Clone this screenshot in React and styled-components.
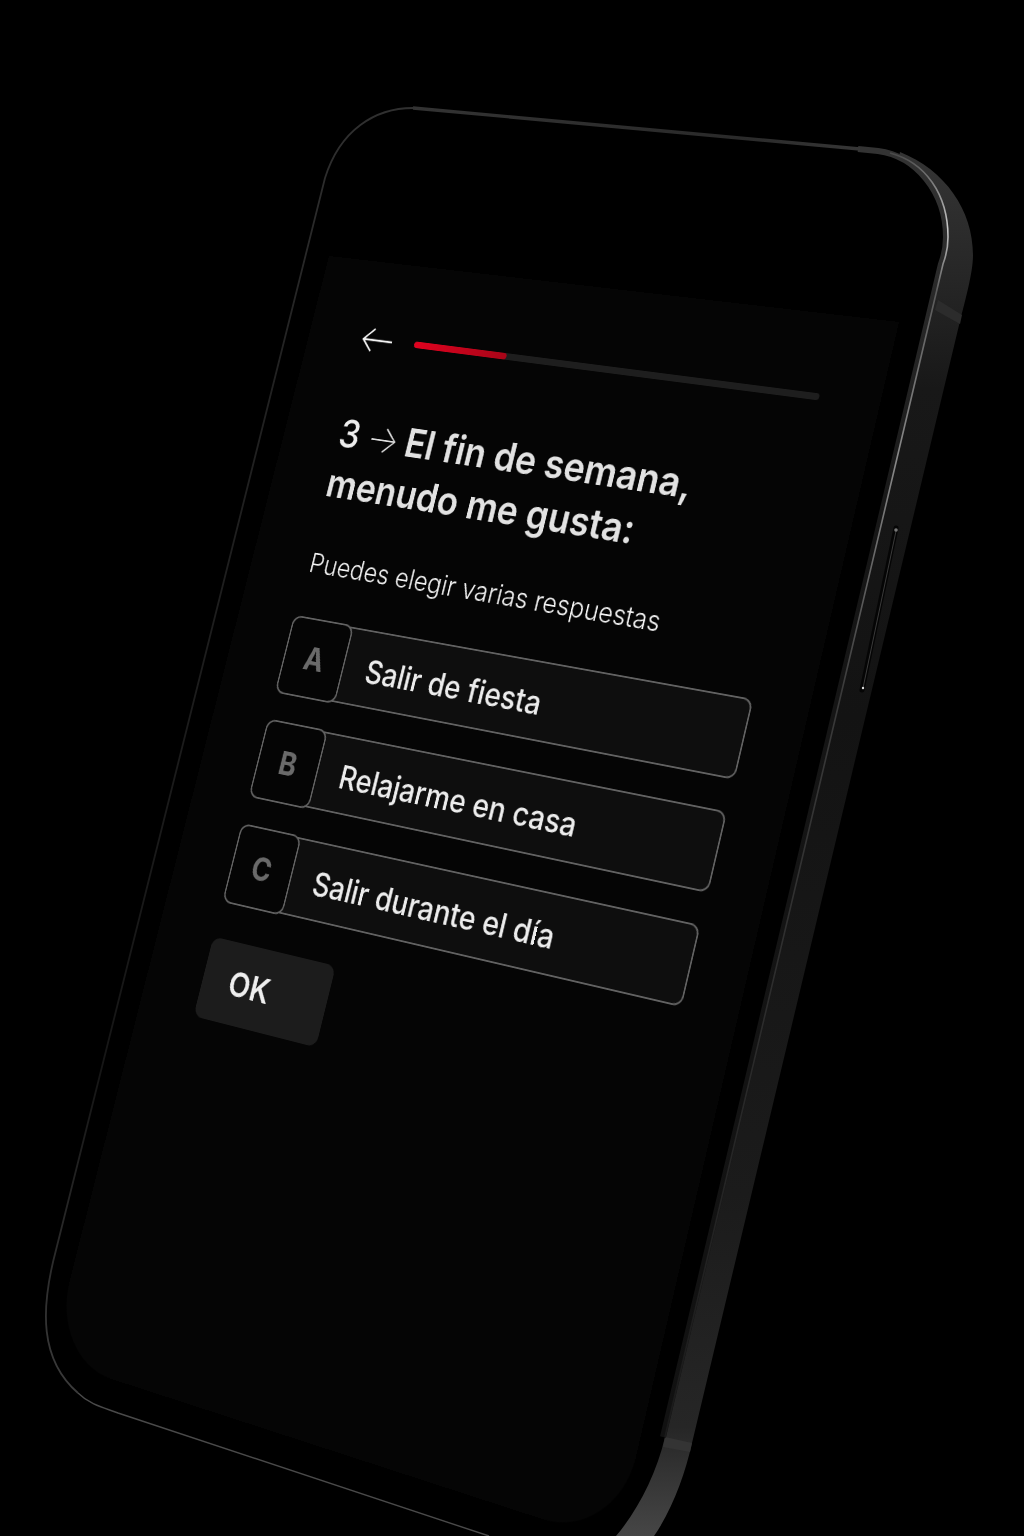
import styled, { createGlobalStyle } from 'styled-components'

const SCREEN_W = 390
const SCREEN_H = 680

// corners of the tilted screen in the photo: top left, top right, bottom right, bottom left
const quadTransform = ([p0, p1, p2, p3], w, h) => {
    const dx1 = p1[0] - p2[0]
    const dx2 = p3[0] - p2[0]
    const sx = p0[0] - p1[0] + p2[0] - p3[0]
    const dy1 = p1[1] - p2[1]
    const dy2 = p3[1] - p2[1]
    const sy = p0[1] - p1[1] + p2[1] - p3[1]
    const den = dx1 * dy2 - dx2 * dy1
    const g = (sx * dy2 - dx2 * sy) / den
    const k = (dx1 * sy - sx * dy1) / den
    const a = p1[0] - p0[0] + g * p1[0]
    const b = p3[0] - p0[0] + k * p3[0]
    const d = p1[1] - p0[1] + g * p1[1]
    const e = p3[1] - p0[1] + k * p3[1]
    return `matrix3d(${a / w},${d / w},0,${g / w},${b / h},${e / h},0,${k / h},0,0,1,0,${p0[0]},${p0[1]},0,1)`
}

const screenTransform = quadTransform(
    [[329, 256], [899, 322], [616, 1543], [50, 1359]],
    SCREEN_W,
    SCREEN_H
)

const options = [
    { letter: 'A', label: 'Salir de fiesta' },
    { letter: 'B', label: 'Relajarme en casa' },
    { letter: 'C', label: 'Salir durante el día' },
]

const PhoneBody = () => (
    <BodySvg viewBox="0 0 1024 1536" width="1024" height="1536">
        <defs>
            <linearGradient id="band" gradientUnits="userSpaceOnUse" x1="0" y1="170" x2="0" y2="1536">
                <stop offset="0" stopColor="#333" />
                <stop offset="0.08" stopColor="#262626" />
                <stop offset="0.16" stopColor="#181818" />
                <stop offset="0.4" stopColor="#131313" />
                <stop offset="0.75" stopColor="#1b1b1b" />
                <stop offset="0.92" stopColor="#262626" />
                <stop offset="1" stopColor="#464646" />
            </linearGradient>
            <linearGradient id="shine" gradientUnits="userSpaceOnUse" x1="0" y1="150" x2="0" y2="1440">
                <stop offset="0" stopColor="#444" />
                <stop offset="0.06" stopColor="#c8c8c8" />
                <stop offset="0.11" stopColor="#5a5a5a" />
                <stop offset="0.24" stopColor="#8a8a8a" />
                <stop offset="0.42" stopColor="#3a3a3a" />
                <stop offset="1" stopColor="#1a1a1a" />
            </linearGradient>
            <linearGradient id="bezel" gradientUnits="userSpaceOnUse" x1="0" y1="150" x2="0" y2="1440">
                <stop offset="0" stopColor="#333" />
                <stop offset="0.1" stopColor="#2a2a2a" />
                <stop offset="0.3" stopColor="#161616" />
                <stop offset="1" stopColor="#111" />
            </linearGradient>
            <linearGradient id="topEdge" gradientUnits="userSpaceOnUse" x1="413" y1="0" x2="880" y2="0">
                <stop offset="0" stopColor="#333" />
                <stop offset="0.7" stopColor="#2a2a2a" />
                <stop offset="1" stopColor="#383838" />
            </linearGradient>
            <linearGradient id="leftEdge" gradientUnits="userSpaceOnUse" x1="0" y1="110" x2="0" y2="1400">
                <stop offset="0" stopColor="#303030" />
                <stop offset="0.2" stopColor="#222" />
                <stop offset="0.75" stopColor="#161616" />
                <stop offset="1" stopColor="#3c3c3c" />
            </linearGradient>
        </defs>
        <path
            d="M900 152 C945 170 973 210 973 255 C973 270 968 290 960 321 L692 1443 C685 1475 672 1510 654 1536 L640 1560 L600 1560 L660 1420 Z"
            fill="url(#band)"
        />
        <path
            d="M413 108 L880 151 C918 156 948 192 948 237 C948 248 946 256 943 264 L665 1437 C656 1475 638 1510 616 1536 L600 1560 L540 1560 L118 1413 C105 1408 90 1405 78 1393 C40 1360 40 1310 56 1250 L325 178 C340 130 375 108 413 108 Z"
            fill="#000"
        />
        <path d="M938 300 L962 315 L960 324 L935 310 Z" fill="#2c2c2c" />
        <path d="M665 1437 L692 1443 L690 1452 L663 1447 Z" fill="#343434" />
        <path d="M860 149 L880 151 C918 156 948 192 948 237 C948 248 946 256 943 264 L665 1437" fill="none" stroke="url(#bezel)" strokeWidth="6" transform="translate(-2 0)" />
        <path d="M890 153 C925 162 948 194 948 237 C948 248 946 256 943 264 L665 1437" fill="none" stroke="url(#shine)" strokeWidth="1.6" />
        <path d="M413 108 L860 149" fill="none" stroke="url(#topEdge)" strokeWidth="3.4" />
        <path d="M413 108 C375 108 340 130 325 178 L56 1250 C40 1310 40 1360 78 1393" fill="none" stroke="url(#leftEdge)" strokeWidth="1.8" />
        <path d="M78 1393 C90 1405 105 1408 118 1413 L489 1536" fill="none" stroke="#4a4a4a" strokeWidth="1.4" />
        <path d="M896 528 L862 690" fill="none" stroke="#050505" strokeWidth="5" strokeLinecap="round" />
        <path d="M896 531 L863 688" fill="none" stroke="#484848" strokeWidth="0.8" />
        <circle cx="896" cy="530" r="1.8" fill="#777" />
        <circle cx="863" cy="688" r="1.2" fill="#ddd" />
    </BodySvg>
)

const BackArrow = () => (
    <ArrowSvg viewBox="0 0 22 16">
        <path d="M22 8.5 H1 M8 1.5 L1 8.5 L8 15.5" fill="none" stroke="#f2f2f2" strokeWidth="1.2" />
    </ArrowSvg>
)

const App = () => {
    return (
        <Stage>
            <GlobalStyle />
            <PhoneBody />
            <Screen style={{ transform: screenTransform }}>
                <Header>
                    <BackArrow />
                    <Track>
                        <Fill $value={24} />
                    </Track>
                </Header>
                <Title>
                    <Step>3 </Step>
                    <StepArrow>→ </StepArrow>
                    El fin de semana,
                    <br />
                    menudo me gusta:
                </Title>
                <Hint>Puedes elegir varias respuestas</Hint>
                <Options>
                    {options.map((option) => (
                        <Option key={option.letter}>
                            <Letter>{option.letter}</Letter>
                            <Label>{option.label}</Label>
                        </Option>
                    ))}
                </Options>
                <OkButton>OK</OkButton>
            </Screen>
        </Stage>
    )
}

const GlobalStyle = createGlobalStyle`
    html, body {
        margin: 0;
        background: #000;
    }
`

const Stage = styled.div`
    position: relative;
    width: 1024px;
    height: 1536px;
    overflow: hidden;
    background: #000;
    font-family: Inter, "Liberation Sans", sans-serif;
`

const BodySvg = styled.svg`
    position: absolute;
    left: 0;
    top: 0;
`

const Screen = styled.div`
    position: relative;
    box-sizing: border-box;
    width: ${SCREEN_W}px;
    height: ${SCREEN_H}px;
    padding: 40px 35px 0 39px;
    background: #050505;
    border-radius: 0 0 46px 46px;
    transform-origin: 0 0;
`

const Header = styled.div`
    display: flex;
    align-items: center;
    gap: 16px;
    height: 16px;
    margin-right: 3px;
`

const ArrowSvg = styled.svg`
    width: 22px;
    height: 16px;
    flex-shrink: 0;
`

const Track = styled.div`
    flex: 1;
    height: 4px;
    border-radius: 2px;
    background: #1e1e1e;
    overflow: hidden;
`

const Fill = styled.div`
    width: ${(props) => props.$value}%;
    height: 100%;
    border-radius: 2px;
    background: linear-gradient(90deg, #e0021f, #a80518);
`

const Title = styled.h1`
    margin: 36px 0 0 1px;
    font-size: 24px;
    line-height: 31px;
    font-weight: 600;
    color: #e2e2e2;
`

const Step = styled.span`
    font-weight: 500;
    color: #eee;
`

const StepArrow = styled.span`
    margin-left: -1px;
    margin-right: -2px;
    font-weight: 200;
    color: #ddd;
`

const Hint = styled.p`
    margin: 24px 0 0 3px;
    font-size: 16.5px;
    line-height: 20px;
    font-weight: 300;
    color: #f0f0f0;
`

const Options = styled.div`
    display: flex;
    flex-direction: column;
    gap: 18px;
    margin: 24px 0 0 1.5px;
`

const Option = styled.div`
    display: flex;
    align-items: stretch;
    box-sizing: border-box;
    height: 46px;
    border: 1.6px solid #626262;
    border-radius: 6px;
    background: #0e0e0e;
`

const Letter = styled.div`
    display: flex;
    align-items: center;
    justify-content: center;
    box-sizing: border-box;
    width: 44px;
    margin: -1.6px 0 -1.6px -1.6px;
    padding-top: 1px;
    border: 1.6px solid #626262;
    border-radius: 6px;
    background: #050505;
    font-size: 19px;
    font-weight: 700;
    color: #6a6a6a;
`

const Label = styled.div`
    display: flex;
    align-items: center;
    padding: 2px 0 0 16px;
    font-size: 18.8px;
    font-weight: 500;
    color: #ececec;
`

const OkButton = styled.button`
    display: block;
    box-sizing: border-box;
    width: 89px;
    height: 48px;
    margin: 22px 0 0 1px;
    padding: 0 0 0 19px;
    border: none;
    border-radius: 6px;
    background: #1c1c1c;
    font-family: inherit;
    font-size: 20px;
    font-weight: 600;
    text-align: left;
    color: #eee;
`

export default App
